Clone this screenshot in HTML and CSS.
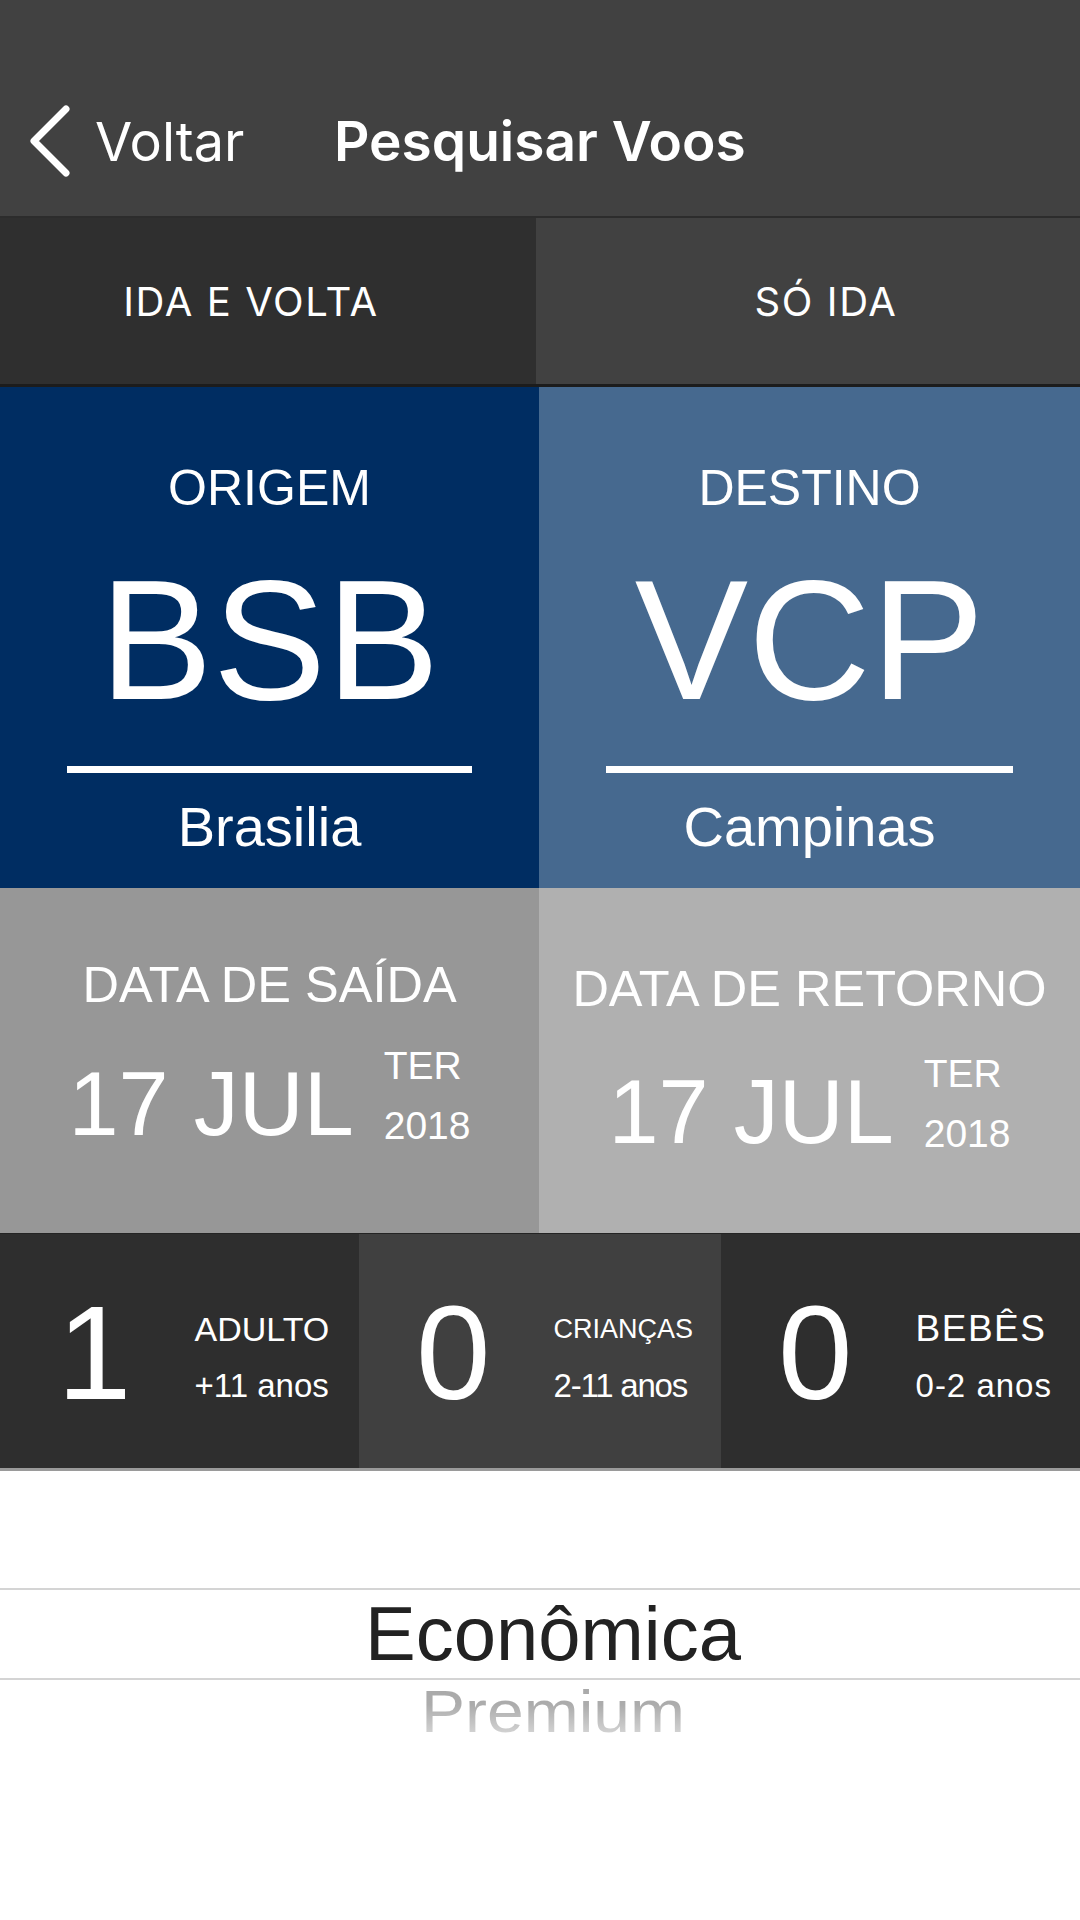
FILE: index.html
```html
<!DOCTYPE html>
<html lang="pt-BR">
<head>
<meta charset="utf-8">
<title>Pesquisar Voos</title>
<link rel="stylesheet" href="styles.css">
</head>
<body>
<div class="screen">
  <header class="navbar">
    <div class="nav-row">
      <a class="back">
        <svg class="back-icon" viewBox="0 0 50 80" width="50" height="80" aria-hidden="true">
          <path d="M42 8 L10 40 L42 72" fill="none" stroke="#ffffff" stroke-width="7" stroke-linecap="round" stroke-linejoin="round"/>
        </svg>
        <span>Voltar</span>
      </a>
      <h1 class="title">Pesquisar Voos</h1>
    </div>
  </header>

  <div class="tabs">
    <div class="tab tab-active">IDA E VOLTA</div>
    <div class="tab tab-other">SÓ IDA</div>
  </div>

  <div class="places">
    <div class="place place-origin">
      <div class="place-label">ORIGEM</div>
      <div class="place-code">BSB</div>
      <div class="place-rule"></div>
      <div class="place-city">Brasilia</div>
    </div>
    <div class="place place-dest">
      <div class="place-label">DESTINO</div>
      <div class="place-code">VCP</div>
      <div class="place-rule"></div>
      <div class="place-city">Campinas</div>
    </div>
  </div>

  <div class="dates">
    <div class="date date-out">
      <div class="date-label">DATA DE SAÍDA</div>
      <div class="date-row">
        <div class="date-main">17 JUL</div>
        <div class="date-side"><div>TER</div><div>2018</div></div>
      </div>
    </div>
    <div class="date date-back">
      <div class="date-label">DATA DE RETORNO</div>
      <div class="date-row date-row-back">
        <div class="date-main">17 JUL</div>
        <div class="date-side"><div>TER</div><div>2018</div></div>
      </div>
    </div>
  </div>

  <div class="pax">
    <div class="pax-col pax-adult">
      <div class="pax-num">1</div>
      <div class="pax-info">
        <div class="pax-type">ADULTO</div>
        <div class="pax-age">+11 anos</div>
      </div>
    </div>
    <div class="pax-col pax-child">
      <div class="pax-num">0</div>
      <div class="pax-info">
        <div class="pax-type pax-type-sm">CRIANÇAS</div>
        <div class="pax-age pax-age-tight">2-11 anos</div>
      </div>
    </div>
    <div class="pax-col pax-baby">
      <div class="pax-num">0</div>
      <div class="pax-info">
        <div class="pax-type pax-type-wide">BEBÊS</div>
        <div class="pax-age pax-age-wide">0-2 anos</div>
      </div>
    </div>
  </div>

  <div class="picker">
    <div class="picker-selected">Econômica</div>
    <div class="picker-next"><span class="picker-next-text">Premium</span></div>
  </div>
</div>
</body>
</html>
```

FILE: styles.css
```css
* {
  box-sizing: border-box;
  margin: 0;
  padding: 0;
}

html, body {
  width: 1080px;
  height: 1920px;
  overflow: hidden;
  background: #ffffff;
}

body {
  font-family: "Liberation Sans", Arial, sans-serif;
  color: #ffffff;
}

.screen {
  width: 1080px;
  height: 1920px;
  display: flex;
  flex-direction: column;
}

/* Navigation bar */
.navbar {
  height: 218px;
  flex: none;
  background: #414141;
  border-bottom: 2px solid #2c2c2c;
  padding-top: 66px;
  font-family: Inter, "Liberation Sans", sans-serif;
}

.nav-row {
  height: 150px;
  display: flex;
  align-items: center;
  padding-left: 24px;
}

.back {
  display: flex;
  align-items: center;
  gap: 21px;
  width: 310px;
  font-size: 54px;
  font-weight: 400;
  color: #ffffff;
}

.back-icon {
  display: block;
  width: 50px;
  height: 80px;
}

.title {
  font-size: 55px;
  font-weight: 600;
}

/* Trip type tabs */
.tabs {
  display: flex;
  height: 169px;
  flex: none;
  border-bottom: 3px solid #1c1c1c;
  font-family: Inter, "Liberation Sans", sans-serif;
  font-size: 40px;
  letter-spacing: 1.6px;
}

.tab {
  display: flex;
  align-items: center;
  justify-content: center;
}

.tab-active {
  width: 536px;
  background: #2f2f2f;
  padding-right: 34px;
}

.tab-other {
  flex: 1;
  background: #414141;
  padding-left: 36px;
}

/* Origin / destination */
.places {
  display: flex;
  height: 501px;
  flex: none;
}

.place {
  display: flex;
  flex-direction: column;
  align-items: center;
  padding: 76px 67px 0;
}

.place-origin {
  width: 539px;
  background: #002d62;
}

.place-dest {
  flex: 1;
  background: #46698f;
}

.place-label {
  font-size: 50px;
  line-height: 1;
}

.place-code {
  font-size: 170px;
  line-height: 1;
  margin-top: 42px;
}

.place-rule {
  align-self: stretch;
  height: 7px;
  background: #ffffff;
  margin-top: 41px;
}

.place-city {
  font-size: 56px;
  line-height: 1;
  margin-top: 26px;
}

/* Dates */
.dates {
  display: flex;
  height: 345px;
  flex: none;
}

.date {
  display: flex;
  flex-direction: column;
  align-items: center;
  padding-top: 72px;
}

.date-out {
  width: 539px;
  background: #979797;
}

.date-back {
  flex: 1;
  background: #b0b0b0;
  padding-top: 76px;
}

.date-label {
  font-size: 50.5px;
  line-height: 1;
}

.date-row {
  display: flex;
  align-items: flex-start;
  gap: 30px;
  margin-top: 35px;
}

.date-row-back {
  margin-top: 39px;
}

.date-main {
  font-size: 90px;
  line-height: 1;
  margin-top: 13px;
}

.date-side {
  display: flex;
  flex-direction: column;
  gap: 21px;
  font-size: 39px;
  line-height: 1;
}

/* Passengers */
.pax {
  display: flex;
  height: 238px;
  flex: none;
  border-top: 1px solid #242424;
  border-bottom: 3px solid #9a9a9a;
}

.pax-col {
  display: flex;
  align-items: flex-start;
  padding: 52px 0 0 57px;
}

.pax-adult {
  width: 359px;
  background: #2e2e2e;
}

.pax-child {
  width: 362px;
  background: #404040;
}

.pax-baby {
  flex: 1;
  background: #2e2e2e;
}

.pax-num {
  font-size: 134px;
  line-height: 1;
}

.pax-info {
  margin-left: 63px;
  margin-top: 26px;
}

.pax-type {
  font-size: 34px;
  line-height: 34px;
}

.pax-type-sm {
  font-size: 27px;
}

.pax-type-wide {
  font-size: 37px;
  letter-spacing: 1.5px;
}

.pax-age {
  font-size: 33px;
  line-height: 1;
  margin-top: 23px;
}

.pax-age-tight {
  letter-spacing: -1.2px;
}

.pax-age-wide {
  letter-spacing: 1px;
}

/* Cabin picker */
.picker {
  flex: 1;
  padding-top: 117px;
  background: #ffffff;
}

.picker-selected {
  height: 92px;
  border-top: 2px solid #d4d4d4;
  border-bottom: 2px solid #d4d4d4;
  padding-left: 26px;
  font-size: 76px;
  line-height: 88px;
  text-align: center;
  color: #222222;
}

.picker-next {
  padding-left: 26px;
  margin-top: 2px;
  text-align: center;
  font-size: 66px;
  line-height: 1;
  transform: scaleY(0.9);
  transform-origin: top center;
}

.picker-next-text {
  background: linear-gradient(180deg, #a8a8a8 0%, #acacac 40%, #e2e2e2 100%);
  -webkit-background-clip: text;
  background-clip: text;
  color: transparent;
}
```
